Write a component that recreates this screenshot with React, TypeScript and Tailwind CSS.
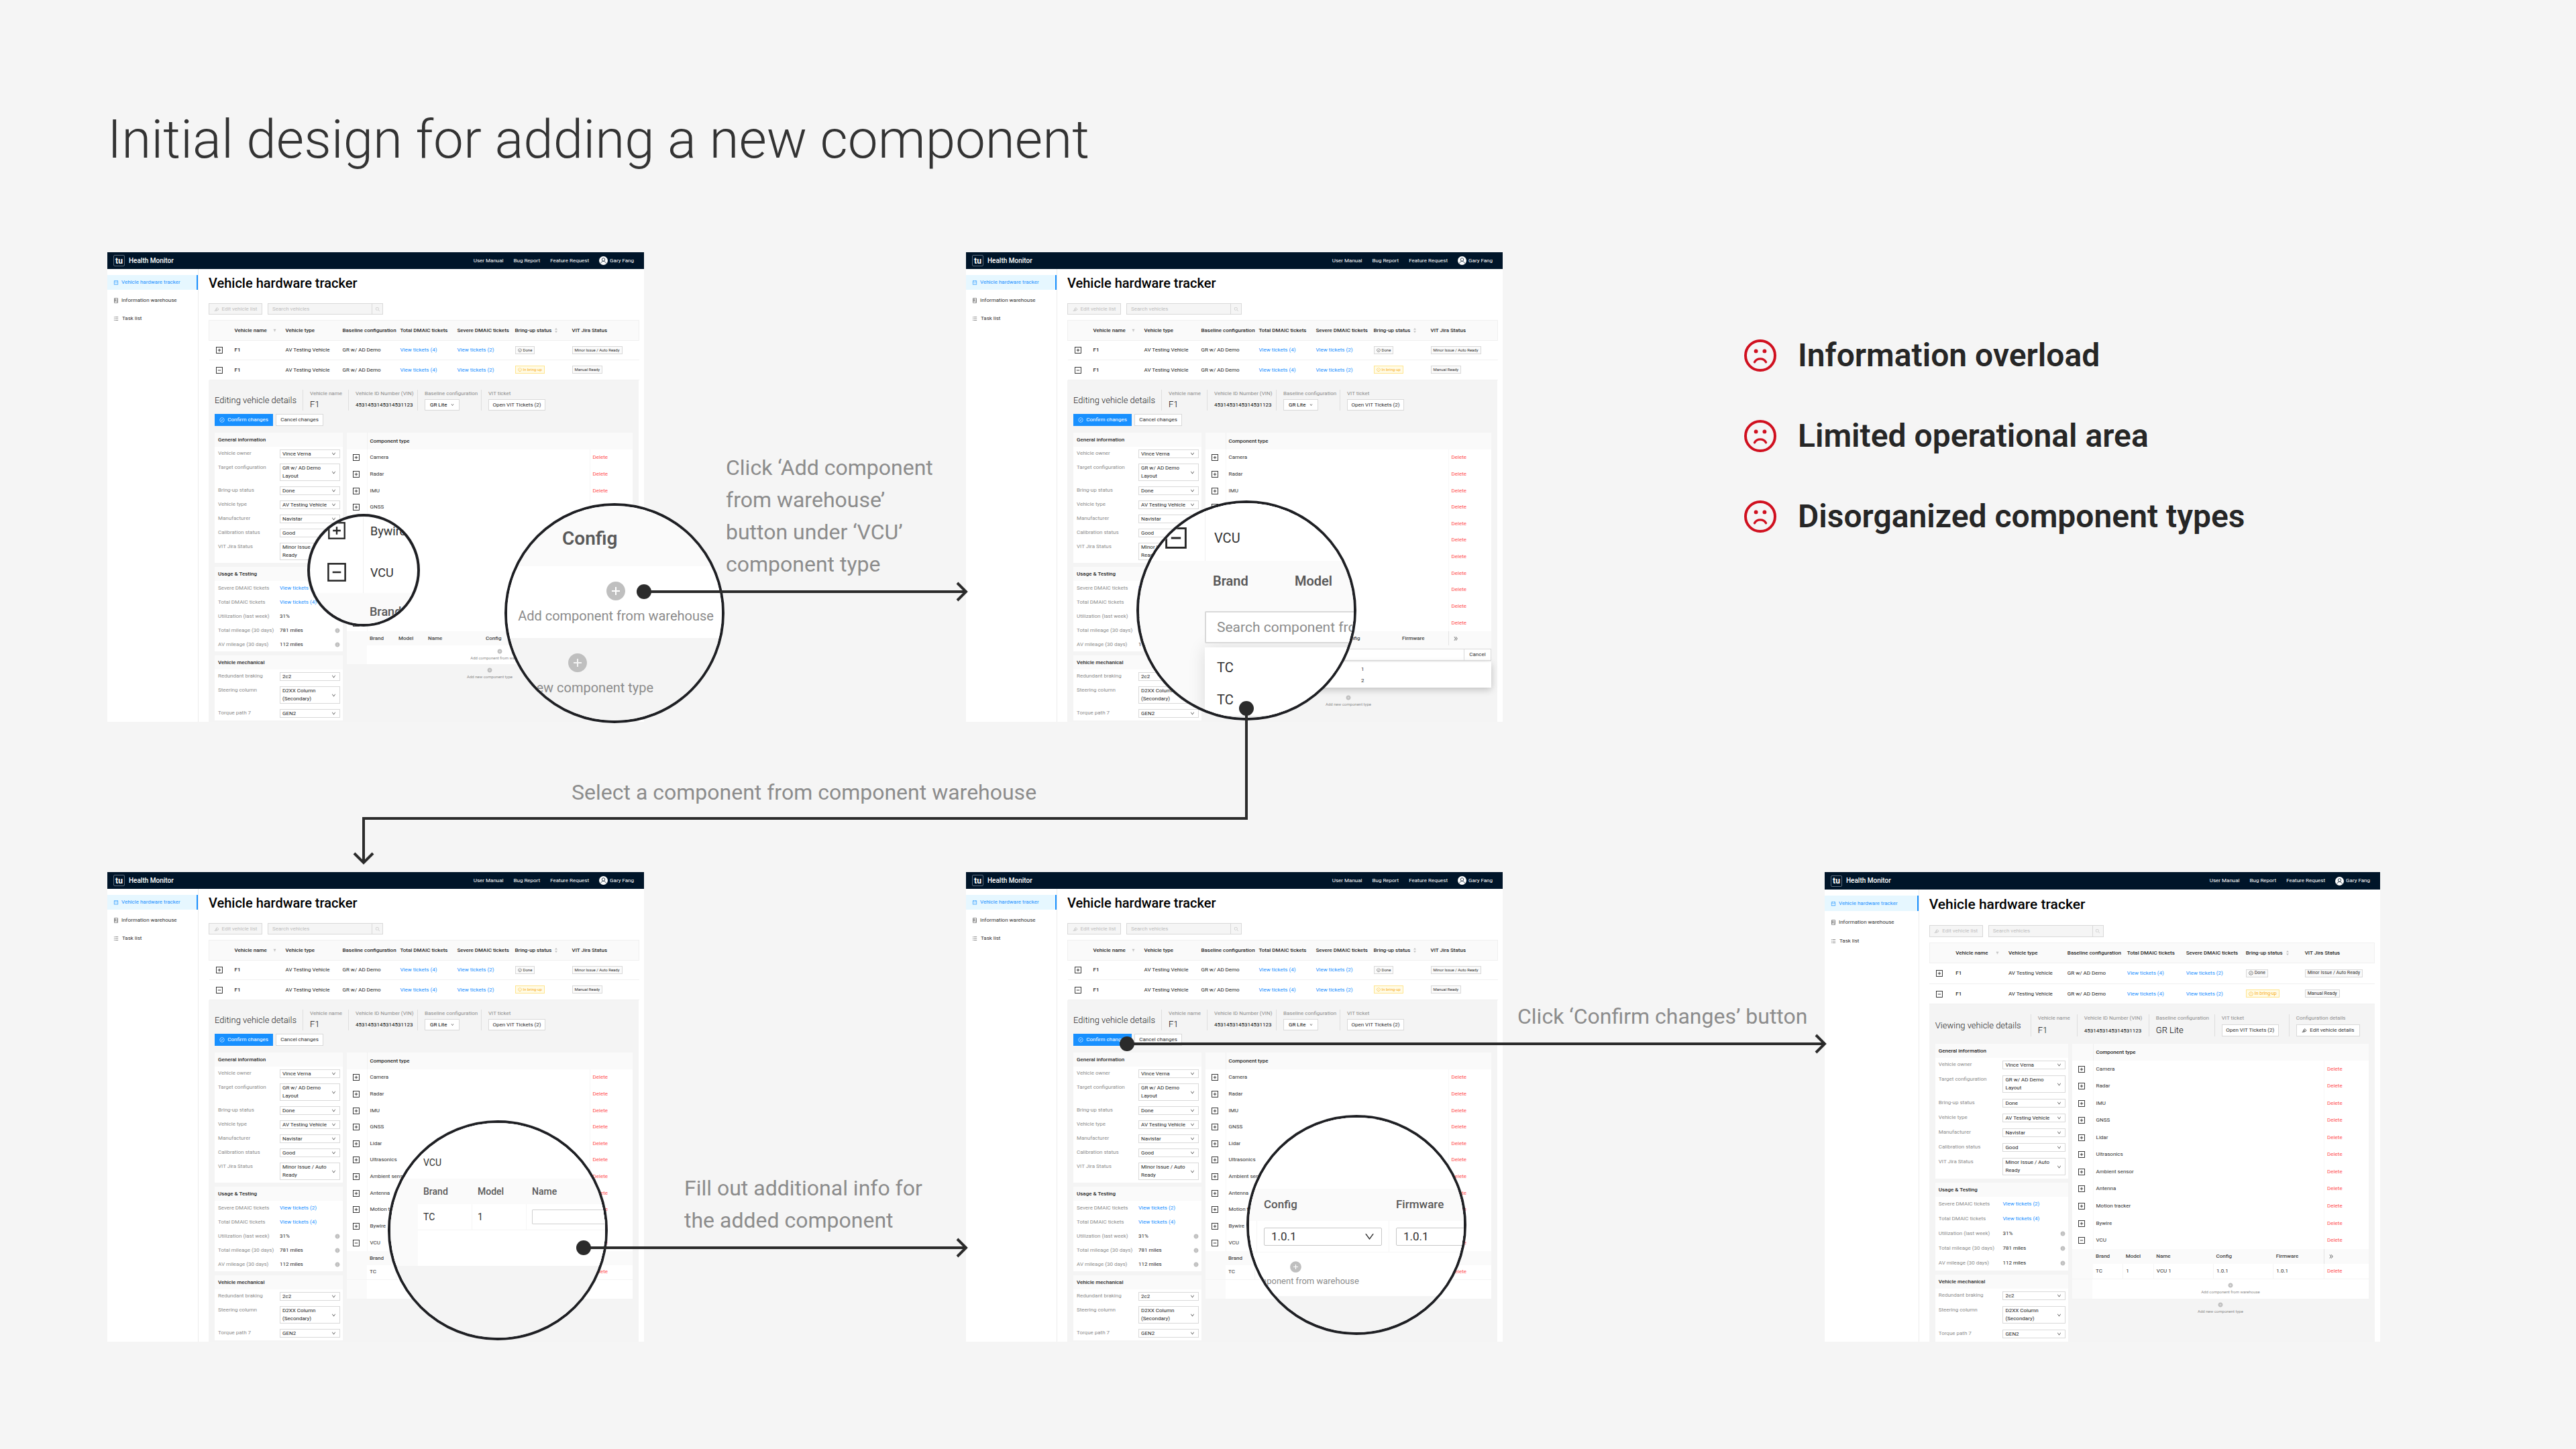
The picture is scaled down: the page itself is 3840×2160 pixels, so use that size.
import { createContext, useContext, useId } from "react";
import type { ReactNode } from "react";
import {
  AiFillFilter,
  AiFillInfoCircle,
  AiFillPlusCircle,
  AiOutlineCalendar,
  AiOutlineCheckCircle,
  AiOutlineDoubleRight,
  AiOutlineDown,
  AiOutlineExclamationCircle,
  AiOutlineHdd,
  AiOutlineHighlight,
  AiOutlineSearch,
  AiOutlineUnorderedList,
} from "react-icons/ai";

/* ---------- sizes of the app window ---------- */

const regular = {
  root: "text-[8px] leading-[12px]",
  header: "h-[25px]",
  nav: "h-[22px]",
  title: "pt-[9px] text-[20px] leading-[24px]",
  toolbar: "mt-[18px] h-[17px]",
  tableHead: "h-[30px]",
  row1: "h-[29px]",
  row2: "h-[30px]",
  tag: "text-[6px]",
  fields: "mt-[14px] h-[31px] grid-cols-[131px_68px_103px_95px_1fr]",
  panels: "mt-[10px]",
  cardHead: "h-[21px]",
  single: "h-[21px]",
  double: "h-[34px]",
  list: "h-[271px]",
  sub: "h-[21px]",
  caption: "text-[6px] leading-[9px]",
  button: "h-[17px]",
};

const large: typeof regular = {
  root: "text-[8px] leading-[12px]",
  header: "h-[26px]",
  nav: "h-[23px]",
  title: "pt-[10px] text-[21px] leading-[24px]",
  toolbar: "mt-[19px] h-[18px]",
  tableHead: "h-[30px]",
  row1: "h-[31px]",
  row2: "h-[30px]",
  tag: "text-[7px]",
  fields: "mt-[15px] h-[33px] grid-cols-[142px_69px_107px_98px_111px_1fr]",
  panels: "mt-[11px]",
  cardHead: "h-[21px]",
  single: "h-[22px]",
  double: "h-[35px]",
  list: "h-[281px]",
  sub: "h-[22px]",
  caption: "text-[6px] leading-[10px]",
  button: "h-[18px]",
};

const Size = createContext(regular);

type Mode = "empty" | "search" | "filled" | "view";

/* ---------- small drawings ---------- */

function ExpandBox({ open = false, className = "size-[10px]" }: { open?: boolean; className?: string }) {
  return (
    <svg viewBox="0 0 20 20" className={className} fill="none" stroke="#262626" strokeWidth="1.8" aria-hidden="true">
      <rect x="1" y="1" width="18" height="18" />
      <path d={open ? "M5.5 10h9" : "M5.5 10h9M10 5.5v9"} />
    </svg>
  );
}

function SadFace() {
  return (
    <svg viewBox="0 0 48 48" className="size-12 shrink-0" fill="none" stroke="#d0101f" aria-hidden="true">
      <circle cx="24" cy="24" r="22" strokeWidth="4" />
      <path d="M15.5 33.8C17.2 30.6 20 28.9 24 28.9s6.800 1.700 8.500 4.900" strokeWidth="3.400" strokeLinecap="round" />
      <circle cx="17.600" cy="17.400" r="2.900" fill="#d0101f" stroke="none" />
      <circle cx="30.400" cy="17.400" r="2.900" fill="#d0101f" stroke="none" />
    </svg>
  );
}

function Avatar() {
  return (
    <svg viewBox="0 0 26 26" className="size-[13px]" aria-hidden="true">
      <circle cx="13" cy="13" r="13" fill="#fff" />
      <g fill="none" stroke="#001529" strokeWidth="1.5">
        <circle cx="13" cy="10" r="4.500" />
        <path d="M5 21c1.500-4 4.500-6 8-6s6.500 2 8 6" />
      </g>
    </svg>
  );
}

/* ---------- app window ---------- */

function TopBar() {
  const s = useContext(Size);
  return (
    <header className={`flex items-center bg-[#001529] pr-[15px] pl-[9px] text-white ${s.header}`}>
      <span className="flex size-[17px] items-center justify-center rounded-[2px] border border-[#5b6b7c] text-[12px] leading-none font-bold">
        tu
      </span>
      <span className="ml-[6px] text-[10px] font-medium">Health Monitor</span>
      <nav className="ml-auto flex items-center gap-[15px]">
        <a href="#manual">User Manual</a>
        <a href="#bug">Bug Report</a>
        <a href="#feature">Feature Request</a>
        <a href="#user" className="flex items-center gap-[3px]">
          <Avatar />
          Gary Fang
        </a>
      </nav>
    </header>
  );
}

function SideNav() {
  const s = useContext(Size);
  return (
    <nav className="flex w-[17%] shrink-0 flex-col gap-[5px] border-r border-[#ececec] pt-[9px] text-[#303030]">
      <a
        href="#tracker"
        className={`flex items-center gap-[4px] border-r-2 border-[#1890ff] bg-[#e6f7ff] pl-[9px] text-[#1890ff] ${s.nav}`}
      >
        <AiOutlineCalendar className="size-[8px]" />
        Vehicle hardware tracker
      </a>
      <a href="#warehouse" className={`flex items-center gap-[4px] pl-[9px] ${s.nav}`}>
        <AiOutlineHdd className="size-[8px]" />
        Information warehouse
      </a>
      <a href="#tasks" className={`flex items-center gap-[5px] pl-[9px] ${s.nav}`}>
        <AiOutlineUnorderedList className="size-[8px]" />
        Task list
      </a>
    </nav>
  );
}

function Toolbar() {
  const s = useContext(Size);
  return (
    <div className={`flex gap-[8px] text-[#bfbfbf] ${s.toolbar}`}>
      <button disabled className="flex w-[80px] items-center justify-center gap-[4px] border border-[#d9d9d9] bg-[#f5f5f5]">
        <AiOutlineHighlight />
        Edit vehicle list
      </button>
      <div className="flex w-[172px] border border-[#d9d9d9] bg-[#f5f5f5]">
        <input
          aria-label="Search vehicles"
          disabled
          placeholder="Search vehicles"
          className="min-w-0 flex-1 px-[6px] placeholder:text-[#bfbfbf]"
        />
        <button disabled aria-label="Search" className="flex w-[16px] items-center justify-center border-l border-[#d9d9d9]">
          <AiOutlineSearch />
        </button>
      </div>
    </div>
  );
}

function Tag({ children, tone = "plain" }: { children: ReactNode; tone?: "plain" | "gold" }) {
  const s = useContext(Size);
  const color =
    tone === "gold" ? "border-[#ffe58f] bg-[#fffbe6] text-[#faad14]" : "border-[#d9d9d9] bg-[#fafafa] text-[#303030]";
  return (
    <span className={`inline-flex h-[12px] items-center gap-[2px] border px-[3px] align-middle leading-none ${color} ${s.tag}`}>
      {children}
    </span>
  );
}

function VehicleRow({ open, height }: { open: boolean; height: string }) {
  return (
    <tr className={`border-b border-[#f0f0f0] ${height}`}>
      <td className="pl-[10px]">
        <button aria-label={open ? "Collapse row" : "Expand row"} className="block">
          <ExpandBox open={open} />
        </button>
      </td>
      <td className="pl-[8px] font-medium">F1</td>
      <td className="pl-[8px]">AV Testing Vehicle</td>
      <td className="pl-[8px]">GR w/ AD Demo</td>
      <td className="pl-[8px]">
        <a href="#total" className="text-[#1890ff]">View tickets (4)</a>
      </td>
      <td className="pl-[8px]">
        <a href="#severe" className="text-[#1890ff]">View tickets (2)</a>
      </td>
      <td className="pl-[8px]">
        {open ? (
          <Tag tone="gold">
            <AiOutlineExclamationCircle />
            In bring-up
          </Tag>
        ) : (
          <Tag>
            <AiOutlineCheckCircle />
            Done
          </Tag>
        )}
      </td>
      <td className="pl-[8px]">
        <Tag>{open ? "Manual Ready" : "Minor Issue / Auto Ready"}</Tag>
      </td>
    </tr>
  );
}

function VehicleTable() {
  const s = useContext(Size);
  return (
    <table className="mt-[8px] w-full table-fixed border-collapse text-left whitespace-nowrap text-[#262626]">
      <colgroup>
        <col className="w-[30px]" />
        <col className="w-[76px]" />
        <col className="w-[85px]" />
        <col className="w-[86px]" />
        <col className="w-[85px]" />
        <col className="w-[86px]" />
        <col className="w-[85px]" />
        <col className="w-[108px]" />
      </colgroup>
      <thead>
        <tr className={`border border-[#f0f0f0] bg-[#fafafa] ${s.tableHead}`}>
          <th />
          <th className="pl-[8px] font-medium">
            <span className="flex items-center justify-between pr-[6px]">
              Vehicle name
              <AiFillFilter className="size-[5px] text-[#bfbfbf]" />
            </span>
          </th>
          <th className="pl-[8px] font-medium">Vehicle type</th>
          <th className="pl-[8px] font-medium">Baseline configuration</th>
          <th className="pl-[8px] font-medium">Total DMAIC tickets</th>
          <th className="pl-[8px] font-medium">Severe DMAIC tickets</th>
          <th className="pl-[8px] font-medium">
            <span className="flex items-center gap-[5px]">
              Bring-up status
              <svg viewBox="0 0 8 14" className="h-[7px] w-[4px]" fill="#bfbfbf" aria-hidden="true">
                <path d="M4 0l4 5H0zM4 14l4-5H0z" />
              </svg>
            </span>
          </th>
          <th className="pl-[8px] font-medium">VIT Jira Status</th>
        </tr>
      </thead>
      <tbody>
        <VehicleRow open={false} height={s.row1} />
        <VehicleRow open height={s.row2} />
      </tbody>
    </table>
  );
}

function Field({ label, children }: { label: string; children: ReactNode }) {
  return (
    <div className="flex flex-col justify-between border-l border-[#dedede] pl-[10px]">
      <span className="text-[#8c8c8c]">{label}</span>
      {children}
    </div>
  );
}

function DetailHeader({ viewing }: { viewing: boolean }) {
  const s = useContext(Size);
  const outline = "flex items-center justify-center gap-[4px] border border-[#d9d9d9] bg-white text-[#303030]";
  return (
    <>
      <div className={`grid whitespace-nowrap ${s.fields}`}>
        <h2 className="self-center text-[13px] font-light text-[#262626]">
          {viewing ? "Viewing vehicle details" : "Editing vehicle details"}
        </h2>
        <Field label="Vehicle name">
          <span className="text-[13px] leading-[18px] font-light">F1</span>
        </Field>
        <Field label="Vehicle ID Number (VIN)">
          <span className="leading-[16px]">4531453145314531123</span>
        </Field>
        <Field label="Baseline configuration">
          {viewing ? (
            <span className="text-[13px] leading-[18px] font-light">GR Lite</span>
          ) : (
            <span className="relative block w-[52px]">
              <select
                aria-label="Baseline configuration"
                className={`block w-full appearance-none border border-[#d9d9d9] bg-white pl-[7px] ${s.button}`}
              >
                <option>GR Lite</option>
              </select>
              <AiOutlineDown className="pointer-events-none absolute top-[6px] right-[8px] size-[5px]" />
            </span>
          )}
        </Field>
        <Field label="VIT ticket">
          <button className={`w-[85px] ${outline} ${s.button}`}>Open VIT Tickets (2)</button>
        </Field>
        {viewing && (
          <Field label="Configuration details">
            <button className={`w-[95px] ${outline} ${s.button}`}>
              <AiOutlineHighlight />
              Edit vehicle details
            </button>
          </Field>
        )}
      </div>
      {!viewing && (
        <div className="mt-[5px] flex gap-[4px]">
          <button className="flex h-[18px] w-[87px] items-center justify-center gap-[4px] bg-[#1890ff] text-white">
            <AiOutlineCheckCircle className="size-[8px]" />
            Confirm changes
          </button>
          <button className={`h-[18px] w-[71px] ${outline}`}>Cancel changes</button>
        </div>
      )}
    </>
  );
}

function SelectRow({ label, value, second }: { label: string; value: string; second?: string }) {
  const s = useContext(Size);
  const id = useId();
  return (
    <div className={`grid grid-cols-[97fr_94fr] pt-[4px] ${second ? s.double : s.single}`}>
      <label htmlFor={id} className="pl-[5px] text-[#8c8c8c]">
        {label}
      </label>
      <div className="relative mr-[4px] self-start border border-[#d9d9d9] bg-white text-[#262626]">
        {second ? (
          <>
            <span className="block pl-[3px] whitespace-nowrap">
              {value}
              <br />
              {second}
            </span>
            <select id={id} className="absolute inset-0 w-full opacity-0">
              <option>{`${value} ${second}`}</option>
            </select>
          </>
        ) : (
          <select id={id} className="block h-[11px] w-full appearance-none pl-[3px] leading-[11px]">
            <option>{value}</option>
          </select>
        )}
        <AiOutlineDown className="pointer-events-none absolute inset-y-0 right-[5px] my-auto size-[7px]" />
      </div>
    </div>
  );
}

function InfoRow({ label, value, link }: { label: string; value: string; link?: boolean }) {
  const s = useContext(Size);
  return (
    <div className={`grid grid-cols-[97fr_94fr] items-center ${s.single}`}>
      <span className="pl-[5px] whitespace-nowrap text-[#8c8c8c]">{label}</span>
      {link ? (
        <a href="#tickets" className="text-[#1890ff]">{value}</a>
      ) : (
        <span className="flex items-center justify-between pr-[4px] text-[#262626]">
          {value}
          <AiFillInfoCircle className="size-[8px] text-[#bfbfbf]" />
        </span>
      )}
    </div>
  );
}

function Card({ title, children }: { title: string; children: ReactNode }) {
  const s = useContext(Size);
  return (
    <section className="bg-white">
      <h3 className={`flex items-center bg-[#fafafa] pl-[5px] font-medium text-[#262626] ${s.cardHead}`}>{title}</h3>
      {children}
    </section>
  );
}

function InfoCards() {
  return (
    <div className="flex w-[191px] flex-[191] flex-col gap-[6px]">
      <Card title="General information">
        <SelectRow label="Vehicle owner" value="Vince Verna" />
        <SelectRow label="Target configuration" value="GR w/ AD Demo" second="Layout" />
        <SelectRow label="Bring-up status" value="Done" />
        <SelectRow label="Vehicle type" value="AV Testing Vehicle" />
        <SelectRow label="Manufacturer" value="Navistar" />
        <SelectRow label="Calibration status" value="Good" />
        <SelectRow label="VIT Jira Status" value="Minor Issue / Auto" second="Ready" />
      </Card>
      <Card title="Usage & Testing">
        <InfoRow label="Severe DMAIC tickets" value="View tickets (2)" link />
        <InfoRow label="Total DMAIC tickets" value="View tickets (4)" link />
        <InfoRow label="Utilization (last week)" value="31%" />
        <InfoRow label="Total mileage (30 days)" value="781 miles" />
        <InfoRow label="AV mileage (30 days)" value="112 miles" />
      </Card>
      <Card title="Vehicle mechanical">
        <SelectRow label="Redundant braking" value="2c2" />
        <SelectRow label="Steering column" value="D2XX Column" second="(Secondary)" />
        <SelectRow label="Torque path 7" value="GEN2" />
      </Card>
    </div>
  );
}

const components = [
  "Camera",
  "Radar",
  "IMU",
  "GNSS",
  "Lidar",
  "Ultrasonics",
  "Ambient sensor",
  "Antenna",
  "Motion tracker",
  "Bywire",
  "VCU",
];

function AddButton({ children }: { children: ReactNode }) {
  const s = useContext(Size);
  return (
    <button className="flex w-full flex-col items-center gap-[1px] text-[#8c8c8c]">
      <AiFillPlusCircle className="size-[8px] text-[#bfbfbf]" />
      <span className={s.caption}>{children}</span>
    </button>
  );
}

function PartsTable({ mode }: { mode: Mode }) {
  const s = useContext(Size);
  const cell = "border-r border-b border-[#f5f5f5] pl-[4px]";
  return (
    <div>
      <table className="w-full table-fixed border-collapse text-left">
        <colgroup>
          <col className="w-[30px]" />
          <col className="w-[43px]" />
          <col className="w-[44px]" />
          <col className="w-[86px]" />
          <col className="w-[86px]" />
          <col className="w-[73px]" />
          <col className="w-[64px]" />
        </colgroup>
        <thead>
          <tr className={`bg-[#fafafa] text-[#434343] ${s.sub}`}>
            <th />
            <th className="pl-[4px] font-medium">Brand</th>
            <th className="pl-[4px] font-medium">Model</th>
            <th className="pl-[4px] font-medium">Name</th>
            <th className="pl-[4px] font-medium">Config</th>
            <th className="pl-[4px] font-medium">Firmware</th>
            <th className="border-l border-[#e4e4e4] pl-[6px]">
              <AiOutlineDoubleRight className="size-[8px]" />
            </th>
          </tr>
        </thead>
        {(mode === "filled" || mode === "view") && (
          <tbody>
            <tr className={`bg-white ${s.sub}`}>
              <td className="bg-[#fafafa]" />
              <td className={cell}>TC</td>
              <td className={cell}>1</td>
              <td className={cell}>{mode === "view" && "VCU 1"}</td>
              <td className={cell}>{mode === "view" && "1.0.1"}</td>
              <td className={cell}>{mode === "view" && "1.0.1"}</td>
              <td className="border-b border-l border-b-[#f5f5f5] border-l-[#e4e4e4] pl-[4px]">
                <button className="text-[#ff4d4f]">Delete</button>
              </td>
            </tr>
          </tbody>
        )}
      </table>
      {mode === "search" ? (
        <div className="bg-[#fafafa] pt-[5px] pl-[30px]">
          <div className="flex h-[18px] border border-[#d9d9d9] bg-white">
            <input aria-label="Search component from warehouse" className="min-w-0 flex-1 px-[6px]" />
            <button className="w-[40px] border-l border-[#d9d9d9] text-[#303030]">Cancel</button>
          </div>
          <ul className="mt-[2px] bg-white py-[2px] shadow-[0_3px_10px_rgba(0,0,0,0.22)]">
            {["1", "2"].map((model) => (
              <li key={model} className="grid h-[17px] grid-cols-2 items-center pl-[8px]">
                <span>TC</span>
                <span>{model}</span>
              </li>
            ))}
          </ul>
        </div>
      ) : (
        <div className="bg-[#fafafa] pl-[30px]">
          <div className="bg-white pt-[5px] pb-[5px]">
            <AddButton>Add component from warehouse</AddButton>
          </div>
        </div>
      )}
    </div>
  );
}

function ComponentPanel({ mode }: { mode: Mode }) {
  const s = useContext(Size);
  return (
    <section className="w-[426px] flex-[426] text-[#303030]">
      <table className="w-full table-fixed border-collapse bg-white text-left">
        <colgroup>
          <col className="w-[30px]" />
          <col className="w-[332px]" />
          <col className="w-[64px]" />
        </colgroup>
        <thead>
          <tr className="h-[25px] bg-[#fafafa] text-[#262626]">
            <th className="border-r border-[#f0f0f0]" />
            <th className="pl-[4px] font-medium">Component type</th>
            <th />
          </tr>
        </thead>
      </table>
      <table className={`w-full table-fixed border-collapse bg-white text-left ${s.list}`}>
        <colgroup>
          <col className="w-[30px]" />
          <col className="w-[332px]" />
          <col className="w-[64px]" />
        </colgroup>
        <tbody>
          {components.map((name) => (
            <tr key={name}>
              <td className="border-r border-[#f7f7f7] pl-[9px]">
                <button aria-label={`Toggle ${name}`} className="block">
                  <ExpandBox open={name === "VCU"} />
                </button>
              </td>
              <td className="border-r border-[#f7f7f7] pl-[4px]">{name}</td>
              <td className="pl-[4px]">
                <button className="text-[#ff4d4f]">Delete</button>
              </td>
            </tr>
          ))}
        </tbody>
      </table>
      <PartsTable mode={mode} />
      <div className={mode === "search" ? "pt-[11px]" : "pt-[5px]"}>
        <AddButton>Add new component type</AddButton>
      </div>
    </section>
  );
}

function AppWindow({ mode, children }: { mode: Mode; children?: ReactNode }) {
  const viewing = mode === "view";
  const s = viewing ? large : regular;
  return (
    <Size.Provider value={s}>
      <div className="relative min-w-0">
        <article className={`flex min-h-[700px] flex-col bg-white text-black ${s.root}`}>
          <TopBar />
          <div className="flex flex-1">
            <SideNav />
            <div className="flex min-w-0 flex-1 flex-col pr-[8px] pl-[15px]">
              <h1 className={`font-medium text-black ${s.title}`}>Vehicle hardware tracker</h1>
              <Toolbar />
              <VehicleTable />
              <div className="flex-1 bg-[#f4f4f4] px-[9px]">
                <DetailHeader viewing={viewing} />
                <div className={`flex gap-[6px] ${s.panels}`}>
                  <InfoCards />
                  <ComponentPanel mode={mode} />
                </div>
              </div>
            </div>
          </div>
        </article>
        {children}
      </div>
    </Size.Provider>
  );
}

/* ---------- magnified views ---------- */

function Lens({ place, children }: { place: string; children: ReactNode }) {
  return (
    <div className={`absolute overflow-hidden rounded-full border-4 border-[#1f2024] bg-white ${place}`}>{children}</div>
  );
}

function CollapseLens() {
  return (
    <Lens place="top-[390px] left-[298px] size-[168px]">
      <div className="-mt-[10px] text-[18px] text-[#303030]">
        <div className="grid h-[62px] grid-cols-[79px_1fr] items-center">
          <ExpandBox className="size-[26px] justify-self-center" />
          <span className="flex h-full items-center border-l border-[#f0f0f0] pl-[10px]">Bywire</span>
        </div>
        <div className="grid h-[62px] grid-cols-[79px_1fr] items-center">
          <ExpandBox open className="size-[28px] justify-self-center" />
          <span className="flex h-full items-center border-l border-[#f0f0f0] pl-[10px]">VCU</span>
        </div>
        <div className="flex h-[54px] items-center bg-[#fafafa] pl-[89px] font-medium text-[#595959]">Brand</div>
      </div>
    </Lens>
  );
}

function AddLens() {
  return (
    <Lens place="top-[374px] left-[592px] size-[328px]">
      <div className="flex h-[90px] items-center bg-[#fafafa] pt-[8px] pl-[82px] text-[28px] font-semibold text-[#595959]">
        Config
      </div>
      <button className="flex h-[107px] w-full flex-col items-center gap-[7px] bg-white pt-[21px] pl-[4px] text-[20px] leading-[28px] whitespace-nowrap text-[#8c8c8c]">
        <AiFillPlusCircle className="size-[32px] shrink-0 text-[#bfbfbf]" />
        Add component from warehouse
      </button>
      <div className="h-[123px] bg-[#f4f4f4]">
        <button className="flex w-[210px] flex-col items-center gap-[7px] pt-[21px] text-[20px] leading-[28px] whitespace-nowrap text-[#8c8c8c]">
          <AiFillPlusCircle className="size-[32px] shrink-0 text-[#bfbfbf]" />
          Add new component type
        </button>
      </div>
    </Lens>
  );
}

function SearchLens() {
  return (
    <Lens place="top-[370px] left-[254px] size-[328px]">
      <div className="h-[320px] bg-[#fafafa] text-[20px] text-[#303030]">
        <div className="grid h-[86px] grid-cols-[98px_1fr] bg-white">
          <ExpandBox open className="mt-[36px] ml-[39px] size-[32px]" />
          <span className="border-l border-[#f0f0f0] pt-[37px] pl-[13px] leading-[30px]">VCU</span>
        </div>
        <div className="flex h-[75px] pt-[15px] pl-[110px] leading-[30px] font-semibold text-[#595959]">
          <span className="w-[122px]">Brand</span>
          <span>Model</span>
        </div>
        <div className="ml-[98px]">
          <input
            aria-label="Search component from warehouse"
            placeholder="Search component from warehouse"
            className="h-[48px] w-[400px] rounded-[2px] border-2 border-[#d9d9d9] bg-white px-[16px] text-[21px] placeholder:text-[#8c8c8c]"
          />
          <ul className="mt-[6px] w-[400px] bg-white pt-[6px] shadow-[0_0_24px_rgba(0,0,0,0.12)]">
            <li className="flex h-[48px] items-center pl-[18px]">TC</li>
            <li className="flex h-[48px] items-center pl-[18px]">TC</li>
          </ul>
        </div>
      </div>
    </Lens>
  );
}

function NameLens() {
  return (
    <Lens place="top-[370px] left-[418px] size-[328px]">
      <div className="h-[320px] bg-[#f4f4f4] text-[14px] text-[#303030]">
        <div className="h-[83px] bg-white pt-[49px] pl-[49px] leading-[20px]">VCU</div>
        <div className="flex h-[38px] items-center bg-[#fafafa] pl-[49px] font-medium text-[#595959]">
          <span className="w-[81px] shrink-0">Brand</span>
          <span className="w-[81px] shrink-0">Model</span>
          <span>Name</span>
        </div>
        <div className="h-[92px] bg-[#fafafa] pl-[41px]">
          <div className="h-full bg-white">
            <div className="flex h-[39px] border-b border-[#f5f5f5]">
              <span className="flex w-[81px] shrink-0 items-center border-r border-[#f5f5f5] pl-[8px]">TC</span>
              <span className="flex w-[81px] shrink-0 items-center border-r border-[#f5f5f5] pl-[8px]">1</span>
              <span className="flex items-center pl-[8px]">
                <input aria-label="Name" className="h-[22px] w-[140px] rounded-[1px] border border-[#d0d0d0] bg-white px-2" />
              </span>
            </div>
          </div>
        </div>
      </div>
    </Lens>
  );
}

function VersionSelect({ label }: { label: string }) {
  return (
    <div className="flex w-[197px] shrink-0 items-center border-l border-[#f5f5f5] pl-[10px]">
      <span className="relative block">
        <select
          aria-label={label}
          className="block h-[27px] w-[176px] appearance-none rounded-[2px] border border-[#c8c8c8] bg-white pl-[10px] leading-[24px]"
        >
          <option>1.0.1</option>
        </select>
        <AiOutlineDown className="pointer-events-none absolute top-[5px] right-[10px] size-[17px]" />
      </span>
    </div>
  );
}

function ConfigLens() {
  return (
    <Lens place="top-[362px] left-[418px] size-[328px]">
      <div className="h-[320px] bg-[#f4f4f4] text-[17px] text-[#303030]">
        <div className="h-[106px] bg-white" />
        <div className="flex h-[48px] items-center bg-[#fafafa] pl-[22px] font-medium text-[#595959]">
          <span className="w-[197px] shrink-0">Config</span>
          <span>Firmware</span>
        </div>
        <div className="flex h-[47px] border-b border-[#f5f5f5] bg-white pl-[11px]">
          <VersionSelect label="Config" />
          <VersionSelect label="Firmware" />
        </div>
        <div className="h-[65px] bg-white">
          <button className="flex w-[138px] flex-col items-center gap-[3px] pt-[12px] text-[13px] leading-[18px] whitespace-nowrap text-[#8c8c8c]">
            <AiFillPlusCircle className="size-[19px] shrink-0 text-[#bfbfbf]" />
            Add component from warehouse
          </button>
        </div>
      </div>
    </Lens>
  );
}

/* ---------- slide ---------- */

function Note({ className, children }: { className: string; children: ReactNode }) {
  return <p className={`text-[32px] leading-[48px] whitespace-nowrap text-[#8c8c8c] ${className}`}>{children}</p>;
}

function Connectors() {
  return (
    <svg
      viewBox="0 0 3840 2160"
      className="pointer-events-none absolute top-0 left-0 w-full"
      fill="none"
      stroke="#2b2b2b"
      strokeWidth="4"
      aria-hidden="true"
    >
      <path d="M960 882H1439M1427 869l13 13-13 13" />
      <path d="M1858 1056V1220H542V1286M528 1272l14 14 14-14" />
      <path d="M870 1860H1439M1427 1847l13 13-13 13" />
      <path d="M1680 1556H2719M2707 1543l13 13-13 13" />
      <g fill="#2b2b2b" stroke="none">
        <circle cx="960" cy="882" r="11" />
        <circle cx="1858" cy="1056" r="11" />
        <circle cx="870" cy="1860" r="11" />
        <circle cx="1680" cy="1556" r="11" />
      </g>
    </svg>
  );
}

export default function App() {
  return (
    <main className="relative min-h-screen overflow-hidden bg-[#f5f5f5] pt-[160px] pb-[160px] pl-[160px] font-['Roboto',sans-serif]">
      <h1 className="text-[80px] leading-[96px] font-light text-[#333333]">Initial design for adding a new component</h1>

      <div className="mt-[120px] grid grid-cols-[20fr_12fr_20fr_9fr_31fr] items-start">
        <AppWindow mode="empty">
          <CollapseLens />
          <AddLens />
        </AppWindow>
        <Note className="pt-[297px] pl-[122px]">
          Click ‘Add component
          <br />
          from warehouse’
          <br />
          button under ‘VCU’
          <br />
          component type
        </Note>
        <AppWindow mode="search">
          <SearchLens />
        </AppWindow>
        <div />
        <ul className="flex flex-col gap-[64px] pt-[126px] text-[48px] leading-[56px] font-semibold text-[#262626]">
          {["Information overload", "Limited operational area", "Disorganized component types"].map((issue) => (
            <li key={issue} className="flex items-center gap-[32px]">
              <SadFace />
              {issue}
            </li>
          ))}
        </ul>
      </div>

      <Note className="h-[224px] pt-[81px] pl-[692px]">Select a component from component warehouse</Note>

      <div className="grid grid-cols-[200fr_120fr_200fr_120fr_207fr_73fr] items-start">
        <AppWindow mode="filled">
          <NameLens />
        </AppWindow>
        <Note className="pt-[447px] pl-[60px]">
          Fill out additional info for
          <br />
          the added component
        </Note>
        <AppWindow mode="filled">
          <ConfigLens />
        </AppWindow>
        <Note className="pt-[191px] pl-[22px]">Click ‘Confirm changes’ button</Note>
        <AppWindow mode="view" />
      </div>

      <Connectors />
    </main>
  );
}
